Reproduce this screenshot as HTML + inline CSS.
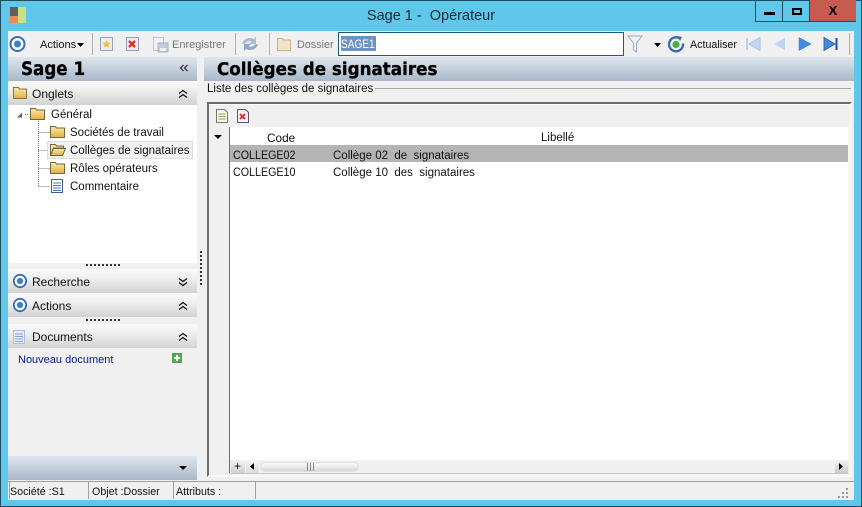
<!DOCTYPE html>
<html><head><meta charset="utf-8"><style>
html,body{margin:0;padding:0}
body{width:862px;height:507px;overflow:hidden;position:relative;background:#5fc8ea;font-family:"Liberation Sans",sans-serif;font-size:11.5px;color:#111}
.a,.t,svg{position:absolute}
.t{white-space:nowrap;line-height:14px}
.hd{position:absolute;left:8px;width:189px;height:24px;background:linear-gradient(#fafafa,#f0f0f0 35%,#d2d2d2)}
.blue{background:linear-gradient(#dfe6ee,#a9b8c8)}
.g{color:#777}
.h1{font-weight:bold;font-family:'DejaVu Sans',sans-serif;transform-origin:0 0;-webkit-text-stroke:.3px #000;color:#000}
.dh{position:absolute;left:86px;width:35px;height:2px;background:repeating-linear-gradient(90deg,#333 0 2px,transparent 2px 4px)}
.cap{font-size:11.500px;transform-origin:0 0;transform:scaleX(.93)}
</style></head><body>
<svg width="0" height="0" style="left:0;top:0"><defs><linearGradient id="f" x1="0" y1="0" x2="0" y2="1"><stop offset="0" stop-color="#fbeaa8"/><stop offset="1" stop-color="#e2b044"/></linearGradient></defs></svg>
<div class="a" style="left:0;top:0;width:860px;height:505px;border:1px solid #1d4f64"></div>
<div class="t" style="left:300px;width:262px;top:7px;text-align:center;font-size:14.500px;line-height:18px;color:#1a2a33;white-space:pre">Sage 1 -  Opérateur</div>
<!-- app icon -->
<div class="a" style="left:10px;top:7px;width:8px;height:9px;background:#5f5f5f"></div>
<div class="a" style="left:10px;top:16px;width:8px;height:7px;background:#f08850"></div>
<div class="a" style="left:18px;top:7px;width:8px;height:16px;background:#c5e27e"></div>
<!-- window buttons -->
<div class="a" style="left:755px;top:0;width:28px;height:22px;border:1px solid #1d4f64;border-top:0;box-sizing:border-box"></div>
<div class="a" style="left:764px;top:12px;width:11px;height:3px;background:#000"></div>
<div class="a" style="left:783px;top:0;width:27px;height:22px;border:1px solid #1d4f64;border-left:0;border-top:0;box-sizing:border-box"></div>
<div class="a" style="left:792px;top:8px;width:10px;height:7px;border:2px solid #000;box-sizing:border-box"></div>
<div class="a" style="left:810px;top:0;width:46px;height:22px;background:#c75b50;border-bottom:1px solid #1d4f64;box-sizing:border-box"></div>
<div class="t" style="left:810px;width:46px;top:4px;text-align:center;font-weight:bold;font-size:13px;color:#000">X</div>
<!-- main area -->
<div class="a" style="left:8px;top:31px;width:846px;height:469px;background:#f0f0f0"></div>
<!-- toolbar -->
<svg style="left:9px;top:35px" width="18" height="18"><circle cx="8.500" cy="9" r="7" fill="#fff" stroke="#3a6ea8" stroke-width="2"/><circle cx="8.500" cy="9" r="3.500" fill="#3f7fc4"/></svg>
<div class="t" style="left:40px;top:38px;font-size:11px">Actions</div>
<svg style="left:77px;top:43px" width="8" height="5"><path d="M0 0h7l-3.500 4z" fill="#000"/></svg>
<div class="a" style="left:92px;top:33px;width:1px;height:22px;background:#b0b0b0"></div>
<svg style="left:99px;top:36px" width="16" height="16"><rect x="1.500" y="1.500" width="12" height="13" fill="#e8eef6" stroke="#9aa3b5"/><path d="M7.500 4l1.200 2.600 2.800.3-2 1.900.5 2.800-2.500-1.400-2.500 1.400.5-2.800-2-1.900 2.800-.3z" fill="#f2c230"/></svg>
<svg style="left:125px;top:36px" width="16" height="16"><rect x="1.500" y="1.500" width="12" height="13" fill="#ece8f0" stroke="#9aa3b5"/><path d="M4 5l6 6M10 5l-6 6" stroke="#d8332a" stroke-width="2.400"/></svg>
<svg style="left:152px;top:36px" width="18" height="17"><rect x="1.500" y="1.500" width="10" height="13" fill="#eef1f5" stroke="#bcc6d4"/><rect x="6" y="7" width="10" height="9" fill="#c0cde0" stroke="#a6b5ca"/><rect x="8" y="12" width="6" height="3" fill="#eef1f5"/></svg>
<div class="t g" style="left:172px;top:38px;font-size:11px">Enregistrer</div>
<div class="a" style="left:235px;top:33px;width:1px;height:22px;background:#b0b0b0"></div>
<svg style="left:241px;top:35px" width="18" height="18"><path d="M1 9a8 7 0 0 1 12-5l2-2v7h-7l2.500-2.500a4.500 4 0 0 0-6 2z" fill="#a8bcd4"/><path d="M17 9a8 7 0 0 1-12 5l-2 2V9h7l-2.500 2.500a4.500 4 0 0 0 6-2z" fill="#8fa8c4"/></svg>
<div class="a" style="left:269px;top:33px;width:1px;height:22px;background:#b0b0b0"></div>
<svg style="left:276px;top:36px" width="16" height="16"><path d="M1.500 2.500h5l1 1.500h7v10.500h-13z" fill="#f3e3c0" stroke="#c4b594"/></svg>
<div class="t g" style="left:297px;top:38px;font-size:10.800px">Dossier</div>
<div class="a" style="left:338px;top:32px;width:286px;height:24px;background:#fff;border:1px solid #1c5a78;box-sizing:border-box"></div>
<div class="a" style="left:341px;top:36px;width:35px;height:15px;background:#6d94c0"></div>
<div class="t" style="left:341px;top:37px;color:#fff;font-size:12px;transform-origin:0 0;transform:scaleX(.84)">SAGE1</div>
<svg style="left:627px;top:35px" width="16" height="18"><path d="M1 1h14l-5.500 7v9l-3-2V8z" fill="#eef3f8" stroke="#93adc6"/></svg>
<svg style="left:654px;top:43px" width="8" height="5"><path d="M0 0h7l-3.500 4z" fill="#000"/></svg>
<svg style="left:667px;top:35px" width="18" height="18"><path d="M13 3.500a7 7 0 1 0 3 5" fill="none" stroke="#3a6ea8" stroke-width="2.400"/><circle cx="9" cy="9.500" r="3.600" fill="#48b048"/><path d="M10 1l5 1-2 4z" fill="#3a6ea8"/></svg>
<div class="t" style="left:690px;top:38px;font-size:10.700px">Actualiser</div>
<svg style="left:745px;top:36px" width="16" height="16"><rect x="1" y="2" width="2" height="12" fill="#b8d0ec"/><path d="M15 1.500v13l-11-6.500z" fill="#c2d8f0" stroke="#a6c2e2"/></svg>
<svg style="left:772px;top:36px" width="14" height="16"><path d="M13 2v12l-11-6z" fill="#bdd5ef"/></svg>
<svg style="left:798px;top:36px" width="14" height="16"><path d="M1 1.500v13l12-6.500z" fill="#3f8ce0" stroke="#2f74c0" stroke-width=".5"/></svg>
<svg style="left:823px;top:36px" width="16" height="16"><path d="M1 1.500v13l11-6.500z" fill="#3f8ce0" stroke="#1f5aa0" stroke-width=".8"/><rect x="12.500" y="2" width="2" height="12" fill="#1f4f98"/></svg>
<div class="a" style="left:849px;top:33px;width:1px;height:22px;background:#b0b0b0"></div>
<!-- left head -->
<div class="a blue" style="left:8px;top:57px;width:189px;height:24px"></div>
<div class="t h1" style="left:21px;top:58px;font-size:19px;line-height:22px;transform:scaleX(.88)">Sage 1</div>
<svg style="left:179px;top:64px" width="10" height="9"><path d="M4.500 1l-3 3 3 3M8.500 1l-3 3 3 3" fill="none" stroke="#222" stroke-width="1.200"/></svg>
<!-- right head -->
<div class="a blue" style="left:204px;top:57px;width:650px;height:24px"></div>
<div class="t h1" style="left:217px;top:59px;font-size:18px;line-height:22px;transform:scaleX(.93)">Collèges de signataires</div>
<div class="t" style="left:207px;top:83px;font-size:11.500px;line-height:13px">Liste des collèges de signataires</div>
<div class="a" style="left:375px;top:88px;width:476px;height:1px;background:#a8a8a8"></div>
<!-- Onglets -->
<div class="hd" style="top:81px"></div>
<svg style="left:12px;top:85px" width="16" height="15"><path d="M1.500 2.500h5l1 1.500h7v9.500h-13z" fill="url(#f)" stroke="#8a7440"/></svg>
<div class="t" style="left:32px;top:87px;font-size:12px">Onglets</div>
<svg style="left:178px;top:89px" width="10" height="10"><path d="M1 4.500l4-3 4 3M1 8.500l4-3 4 3" fill="none" stroke="#111" stroke-width="1.300"/></svg>
<!-- tree -->
<div class="a" style="left:8px;top:105px;width:189px;height:158px;background:#fff"></div>
<svg style="left:8px;top:105px" width="189" height="90">
<path d="M9 12.500l5-5v5z" fill="#666"/>
<path d="M30.500 16v65M30.500 27.500h11M30.500 45.500h11M30.500 63.500h11M30.500 81.500h12M17 9.500h4" stroke="#777" stroke-dasharray="1 1" fill="none"/>
</svg>
<svg style="left:29px;top:107px" width="18" height="14"><path d="M1.500 1.500h5l1 1.500h8v9.500h-14z" fill="url(#f)" stroke="#75653a"/></svg>
<div class="t" style="left:51px;top:108px;font-size:11.500px">Général</div>
<svg style="left:49px;top:125px" width="18" height="14"><path d="M1.500 1.500h5l1 1.500h8v9.500h-14z" fill="url(#f)" stroke="#75653a"/></svg>
<div class="t" style="left:70px;top:126px">Sociétés de travail</div>
<div class="a" style="left:47px;top:141px;width:146px;height:18px;background:#f2f2f2;border:1px solid #dcdcdc;box-sizing:border-box"></div>
<svg style="left:49px;top:143px" width="18" height="14"><path d="M1.500 1.500h5l1 1.500h7v2h-10l-3 7.500z" fill="#f7e2a8" stroke="#75653a"/><path d="M4.500 5.500h12l-3 7h-12z" fill="url(#f)" stroke="#75653a"/></svg>
<div class="t" style="left:70px;top:144px">Collèges de signataires</div>
<svg style="left:49px;top:161px" width="18" height="14"><path d="M1.500 1.500h5l1 1.500h8v9.500h-14z" fill="url(#f)" stroke="#75653a"/></svg>
<div class="t" style="left:70px;top:162px">Rôles opérateurs</div>
<svg style="left:50px;top:178px" width="14" height="16"><rect x="1.500" y="1.500" width="11" height="13" fill="#fff" stroke="#3d5f9a"/><path d="M3 5h8M3 7.500h8M3 10h8M3 12.500h8" stroke="#4a78c0"/></svg>
<div class="t" style="left:70px;top:180px">Commentaire</div>
<!-- grips -->
<div class="dh" style="top:264px"></div>
<div class="dh" style="top:319px"></div>
<div class="a" style="left:200px;top:251px;width:2px;height:35px;background:repeating-linear-gradient(#333 0 2px,transparent 2px 4px)"></div>
<!-- Recherche -->
<div class="hd" style="top:269px"></div>
<svg style="left:12px;top:272px" width="16" height="18"><circle cx="8" cy="9" r="6.200" fill="#fff" stroke="#3a6ea8" stroke-width="1.800"/><circle cx="8" cy="9" r="3.200" fill="#3f7fc4"/></svg>
<div class="t" style="left:32px;top:275px;font-size:12px">Recherche</div>
<svg style="left:178px;top:277px" width="10" height="10"><path d="M1 1.500l4 3 4-3M1 5.500l4 3 4-3" fill="none" stroke="#111" stroke-width="1.300"/></svg>
<!-- Actions -->
<div class="hd" style="top:293px"></div>
<svg style="left:12px;top:296px" width="16" height="18"><circle cx="8" cy="9" r="6.200" fill="#fff" stroke="#3a6ea8" stroke-width="1.800"/><circle cx="8" cy="9" r="3.200" fill="#3f7fc4"/></svg>
<div class="t" style="left:32px;top:299px;font-size:12px">Actions</div>
<svg style="left:178px;top:301px" width="10" height="10"><path d="M1 4.500l4-3 4 3M1 8.500l4-3 4 3" fill="none" stroke="#111" stroke-width="1.300"/></svg>
<!-- Documents -->
<div class="hd" style="top:324px"></div>
<svg style="left:12px;top:329px" width="15" height="16"><rect x="1.500" y="1.500" width="11" height="13" fill="#e4ebf6" stroke="#b0bfd8"/><path d="M3 5h8M3 7.500h8M3 10h8M3 12.500h8" stroke="#8aa6d4"/></svg>
<div class="t" style="left:32px;top:330px;font-size:12px">Documents</div>
<svg style="left:178px;top:332px" width="10" height="10"><path d="M1 4.500l4-3 4 3M1 8.500l4-3 4 3" fill="none" stroke="#111" stroke-width="1.300"/></svg>
<div class="t" style="left:18px;top:353px;color:#0a1a96;font-size:11px">Nouveau document</div>
<svg style="left:172px;top:353px" width="10" height="10"><rect width="10" height="10" fill="#4fa84f"/><path d="M5 2v6M2 5h6" stroke="#fff" stroke-width="2"/></svg>
<!-- left bottom -->
<div class="a blue" style="left:8px;top:456px;width:189px;height:24px"></div>
<svg style="left:179px;top:466px" width="9" height="5"><path d="M0 0h8l-4 4z" fill="#000"/></svg>
<!-- grid frame -->
<div class="a" style="left:207px;top:102px;width:645px;height:375px;border:2px solid #6d6d6d;border-right-color:#f8f8f8;border-bottom-color:#f8f8f8;box-sizing:border-box;background:#f0f0f0"></div>
<div class="a" style="left:209px;top:104px;width:640px;height:1px;background:#fff"></div>
<svg style="left:215px;top:108px" width="14" height="16"><path d="M1.500 1.500h8l3 3v10h-11z" fill="#fbf7d8" stroke="#777"/><path d="M3.500 6h7M3.500 8.500h7M3.500 11h7" stroke="#998"/></svg>
<svg style="left:236px;top:108px" width="14" height="16"><path d="M1.500 1.500h8l3 3v10h-11z" fill="#f2f2f6" stroke="#557"/><path d="M4 6l5 5M9 6l-5 5" stroke="#e02a20" stroke-width="1.900"/></svg>
<!-- grid -->
<div class="a" style="left:229px;top:127px;width:620px;height:333px;background:#fff"></div>
<div class="a" style="left:229px;top:127px;width:1px;height:346px;background:#6d6d6d"></div>
<svg style="left:214px;top:135px" width="9" height="5"><path d="M0 0h8l-4 4z" fill="#000"/></svg>
<div class="t" style="left:267px;top:131px;font-size:11.800px">Code</div>
<div class="t" style="left:541px;top:131px;font-size:11.500px">Libellé</div>
<div class="a" style="left:230px;top:145px;width:618px;height:17px;background:#b4b4b4"></div>
<div class="t cap" style="left:233px;top:149px">COLLEGE02</div>
<div class="t" style="left:333px;top:149px;font-size:11.500px;white-space:pre">Collège 02  de  signataires</div>
<div class="t cap" style="left:233px;top:166px">COLLEGE10</div>
<div class="t" style="left:333px;top:166px;font-size:11.500px;white-space:pre">Collège 10  des  signataires</div>
<!-- scroll -->
<div class="a" style="left:230px;top:460px;width:618px;height:13px;background:#f0f0f0;border-bottom:1px solid #c8c8c8"></div>
<div class="a" style="left:231px;top:460px;width:14px;height:13px;background:linear-gradient(#f4f4f4,#cfcfcf)"></div>
<div class="t" style="left:234px;top:459px;font-size:12px">+</div>
<div class="a" style="left:246px;top:460px;width:13px;height:13px;background:linear-gradient(#f4f4f4,#dcdcdc)"></div>
<svg style="left:250px;top:463px" width="5" height="8"><path d="M4 0v7L0 3.500z" fill="#000"/></svg>
<div class="a" style="left:260px;top:462px;width:99px;height:10px;border-radius:5px;background:linear-gradient(#fafafa,#d8d8d8);border:1px solid #e0e0e0;box-sizing:border-box"></div>
<div class="a" style="left:307px;top:463px;width:7px;height:8px;background:repeating-linear-gradient(90deg,#888 0 1px,transparent 1px 3px)"></div>
<div class="a" style="left:835px;top:460px;width:13px;height:13px;background:linear-gradient(#f4f4f4,#c8c8c8)"></div>
<svg style="left:839px;top:463px" width="5" height="8"><path d="M0 0v7l4-3.500z" fill="#000"/></svg>
<!-- status -->
<div class="a" style="left:8px;top:481px;width:846px;height:19px;background:#f0f0f0;border-top:1px solid #a0a0a0;box-sizing:border-box"></div>
<div class="a" style="left:9px;top:482px;width:1px;height:17px;background:#a0a0a0"></div>
<div class="a" style="left:88px;top:482px;width:1px;height:17px;background:#a0a0a0"></div>
<div class="a" style="left:173px;top:482px;width:1px;height:17px;background:#a0a0a0"></div>
<div class="a" style="left:255px;top:482px;width:1px;height:17px;background:#a0a0a0"></div>
<div class="t" style="left:10px;top:485px;font-size:10.700px">Société :S1</div>
<div class="t" style="left:92px;top:485px;font-size:10.700px">Objet :Dossier</div>
<div class="t" style="left:176px;top:485px;font-size:10.700px">Attributs :</div>
<svg style="left:838px;top:487px" width="12" height="11"><path d="M8 1h2v2H8zM4 5h2v2H4zM8 5h2v2H8zM0 9h2v2H0zM4 9h2v2H4zM8 9h2v2H8z" fill="#9a9a9a"/></svg>
</body></html>
